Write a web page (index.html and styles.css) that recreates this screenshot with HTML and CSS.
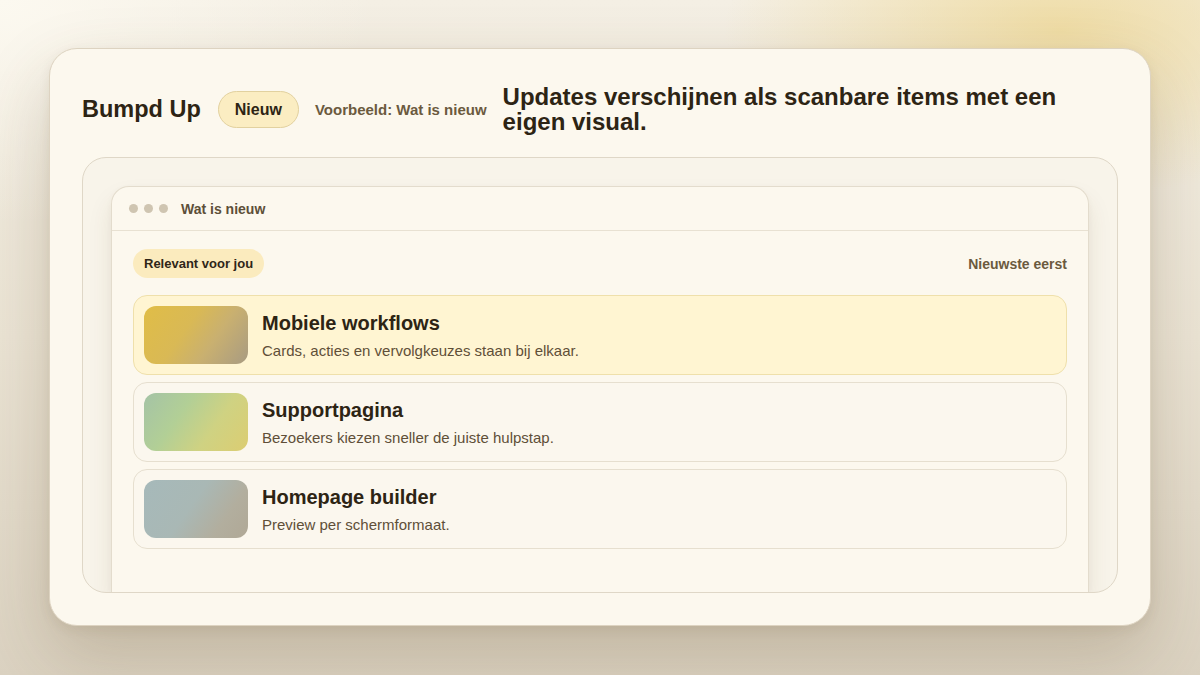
FILE: index.html
```html
<!DOCTYPE html>
<html lang="nl">
<head>
  <meta charset="UTF-8">
  <meta name="viewport" content="width=device-width, initial-scale=1.0">
  <title>Bumpd Up – Wat is nieuw</title>
  <link rel="stylesheet" href="styles.css">
</head>
<body>
  <div class="card">
    <header class="header">
      <span class="brand">Bumpd Up</span>
      <span class="badge">Nieuw</span>
      <span class="example">Voorbeeld: Wat is nieuw</span>
      <h1 class="headline">Updates verschijnen als scanbare items met een eigen visual.</h1>
    </header>

    <div class="frame">
      <div class="window">
        <div class="window-bar">
          <span class="dot"></span>
          <span class="dot"></span>
          <span class="dot"></span>
          <span class="window-title">Wat is nieuw</span>
        </div>

        <div class="window-body">
          <div class="toolbar">
            <span class="chip">Relevant voor jou</span>
            <span class="sort">Nieuwste eerst</span>
          </div>

          <ul class="updates">
            <li class="update is-active">
              <div class="thumb thumb-gold"></div>
              <div class="update-text">
                <h2>Mobiele workflows</h2>
                <p>Cards, acties en vervolgkeuzes staan bij elkaar.</p>
              </div>
            </li>
            <li class="update">
              <div class="thumb thumb-green"></div>
              <div class="update-text">
                <h2>Supportpagina</h2>
                <p>Bezoekers kiezen sneller de juiste hulpstap.</p>
              </div>
            </li>
            <li class="update">
              <div class="thumb thumb-slate"></div>
              <div class="update-text">
                <h2>Homepage builder</h2>
                <p>Preview per schermformaat.</p>
              </div>
            </li>
          </ul>
        </div>
      </div>
    </div>
  </div>
</body>
</html>
```

FILE: styles.css
```css
* {
  box-sizing: border-box;
}
html, body {
  height: 100%;
}
body {
  margin: 0;
  padding: 48px 49px 49px;
  font-family: 'Liberation Sans', Arial, sans-serif;
  color: #2d2414;
  background:
    radial-gradient(ellipse 480px 240px at 1060px 30px, rgba(238, 216, 150, 0.8), rgba(238, 216, 150, 0) 70%),
    radial-gradient(ellipse 500px 300px at 0 0, rgba(252, 249, 240, 1), rgba(252, 249, 240, 0) 75%),
    linear-gradient(180deg, #f4efe4 0%, #ebe4d5 50%, #dbd2c1 100%);
  overflow: hidden;
}
.card {
  height: 578px;
  background: #fcf8ee;
  border: 1px solid #ddd3c1;
  border-radius: 28px;
  box-shadow: 0 30px 70px rgba(90, 70, 30, 0.22), 0 4px 12px rgba(90, 70, 30, 0.08);
  padding: 35px 32px 32px;
  display: flex;
  flex-direction: column;
}

/* top row */
.header {
  display: flex;
  align-items: center;
  gap: 16px;
  margin-bottom: 23px;
}
.brand {
  font-size: 23.5px;
  font-weight: 700;
  color: #2d2414;
  margin-right: 1px;
}
.badge {
  background: #fbedc2;
  border: 1px solid #e2d19f;
  border-radius: 999px;
  padding: 9px 16px;
  font-size: 16px;
  font-weight: 700;
  line-height: 17px;
  color: #2d2414;
}
.example {
  font-size: 15px;
  font-weight: 700;
  color: #6b5a3e;
}
.headline {
  flex: 1;
  margin: 0;
  font-size: 24px;
  line-height: 25px;
  font-weight: 700;
  color: #2d2414;
}

/* preview frame */
.frame {
  flex: 1;
  background: #f8f4ea;
  border: 1px solid #dfd7c7;
  border-radius: 24px;
  padding: 28px 28px 0;
  overflow: hidden;
}
.window {
  height: 100%;
  background: #fcf8ee;
  border: 1px solid #e3dccd;
  border-bottom: 0;
  border-radius: 18px 18px 0 0;
  box-shadow: 0 14px 24px rgba(90, 70, 30, 0.1), 0 2px 6px rgba(90, 70, 30, 0.04);
}
.window-bar {
  display: flex;
  align-items: center;
  height: 44px;
  padding: 0 17px;
  border-bottom: 1px solid #e8e1d2;
}
.dot {
  width: 9px;
  height: 9px;
  border-radius: 50%;
  background: #cfc5b1;
  margin-right: 6px;
}
.window-title {
  margin-left: 7px;
  font-size: 14px;
  font-weight: 700;
  color: #5d4f38;
}
.window-body {
  padding: 18px 21px;
}
.toolbar {
  display: flex;
  align-items: center;
  justify-content: space-between;
  margin-bottom: 17px;
}
.chip {
  background: #fbebbe;
  border-radius: 999px;
  padding: 8px 11px;
  font-size: 13px;
  font-weight: 700;
  line-height: 13px;
  color: #2f2618;
}
.sort {
  font-size: 14px;
  font-weight: 700;
  color: #6b5a3e;
}

/* update list */
.updates {
  list-style: none;
  margin: 0;
  padding: 0;
  display: flex;
  flex-direction: column;
  gap: 7px;
}
.update {
  display: flex;
  align-items: center;
  gap: 14px;
  height: 80px;
  padding: 0 10px;
  background: #fbf7ee;
  border: 1px solid #e6dfcf;
  border-radius: 14px;
}
.update.is-active {
  background: #fff5d2;
  border-color: #efe0ab;
}
.thumb {
  width: 104px;
  height: 58px;
  flex-shrink: 0;
  border-radius: 12px;
}
.thumb-gold {
  background: linear-gradient(125deg, #e0bd47 0%, #d9b955 40%, #c9b070 65%, #a89b82 100%);
}
.thumb-green {
  background: linear-gradient(125deg, #a4c3a6 0%, #b2cf96 35%, #cfd282 65%, #dccd72 100%);
}
.thumb-slate {
  background: linear-gradient(125deg, #a6b9ba 0%, #a9b8b5 45%, #b2ae9e 75%, #b0a896 100%);
}
.update-text h2 {
  margin: 0 0 8px;
  font-size: 20px;
  line-height: 22px;
  font-weight: 700;
  color: #2d2414;
}
.update-text p {
  margin: 0;
  font-size: 15px;
  line-height: 17px;
  color: #5f4f38;
}
```
